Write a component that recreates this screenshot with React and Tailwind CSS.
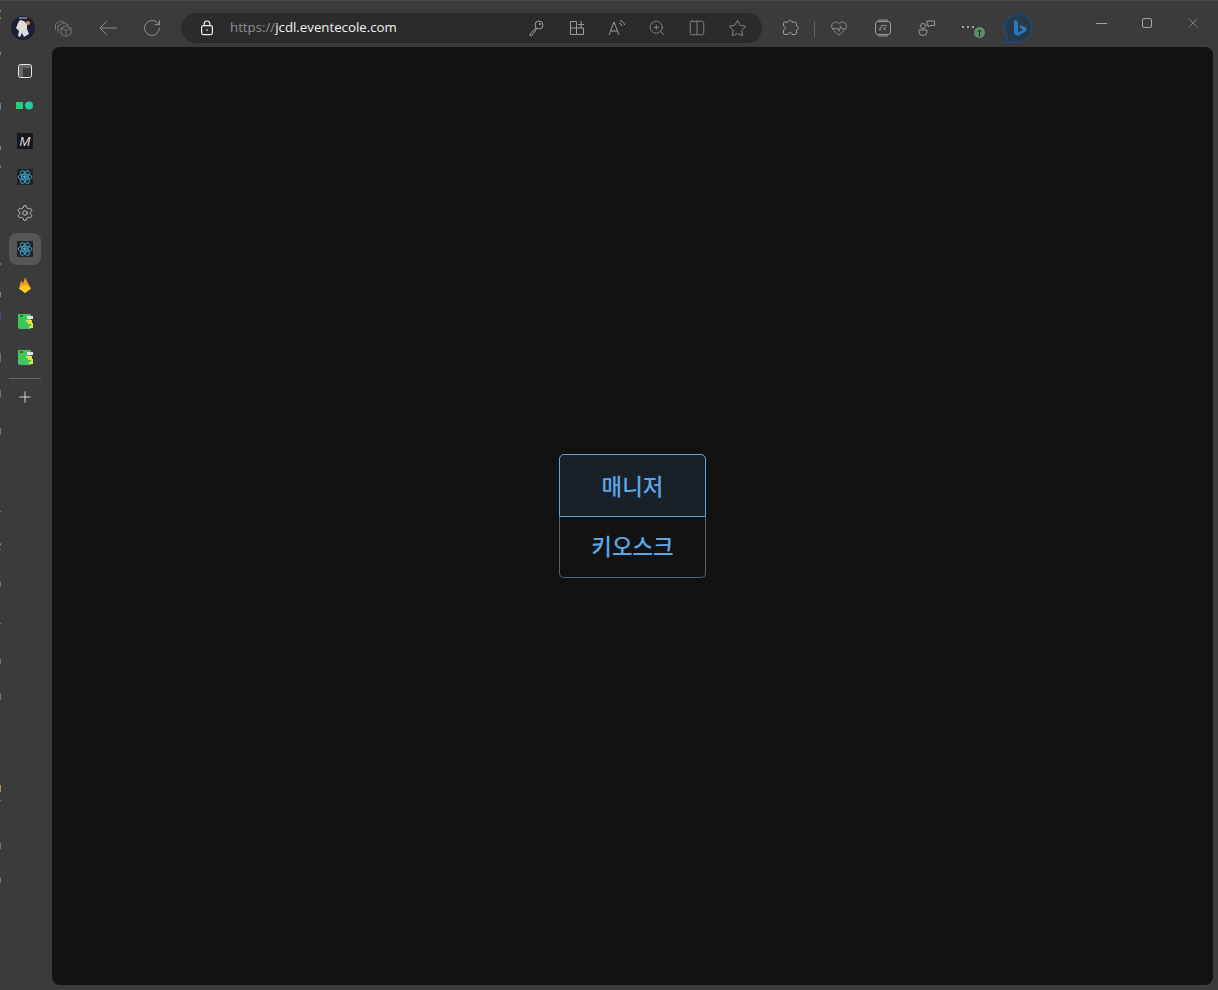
import { RotateCw, Settings, Plus, Star, ZoomIn, HeartPulse, X, Columns2 } from "lucide-react";

const edgeMarks = [
  [10, 2, "#5f8f3f"], [17, 2, "#5f8f3f"], [52, 3, "#6f8f4f"], [103, 7, "#5a7fa8"], [146, 4, "#8a7f55"], [165, 3, "#8a7048"],
  [263, 2, "#5a7fa8"], [292, 5, "#5d8ab0"], [312, 8, "#3f4a90"], [353, 9, "#77704f"], [390, 7, "#77705a"],
  [428, 7, "#5d7f90"], [511, 1, "#5d80a8"], [543, 3, "#77774a"], [549, 1, "#5d80a8"], [582, 5, "#5d7f90"], [623, 1, "#7a6aa0"],
  [659, 5, "#5d7f80"], [693, 7, "#5d7f90"], [785, 7, "#b08f3a"], [800, 1, "#c05a4a"], [843, 6, "#5d80a0"], [878, 5, "#5d80a0"],
];

function ReactIcon() {
  return (
    <div className="w-[16px] h-[16px] bg-[#20232a] flex items-center justify-center">
      <svg width="16" height="16" viewBox="0 0 16 16" fill="none" stroke="#3fa5c4" strokeWidth="0.9">
        <ellipse cx="8" cy="8" rx="7" ry="2.8" />
        <ellipse cx="8" cy="8" rx="7" ry="2.8" transform="rotate(60 8 8)" />
        <ellipse cx="8" cy="8" rx="7" ry="2.8" transform="rotate(120 8 8)" />
        <circle cx="8" cy="8" r="1.4" fill="#3fa5c4" />
      </svg>
    </div>
  );
}

function NoteIcon() {
  return (
    <svg width="16" height="17" viewBox="0 0 16 17">
      <path d="M1 1h12l1 1v14H3l-2-1z" fill="#3ec75c" />
      <rect x="3" y="2" width="3" height="2" fill="#1f7a3a" />
      <rect x="10" y="3" width="6" height="3" fill="#e0e0e0" />
      <path d="M9 7h6v3h1v5h-4v-2h2v-2h-3v-2h-2z" fill="#e6df48" />
    </svg>
  );
}

function SideSlot({ active, children }) {
  return (
    <div className={`w-[32px] h-[32px] my-[2px] rounded-lg flex items-center justify-center ${active ? "bg-[#565656]" : ""}`}>
      {children}
    </div>
  );
}

function Sidebar() {
  return (
    <div className="w-[52px] shrink-0 pl-[9px] pt-[6px] flex flex-col">
      <SideSlot>
        <svg width="16" height="16" viewBox="0 0 16 16" fill="none">
          <rect x="1.5" y="1.5" width="13" height="13" rx="2" stroke="#e6e6e6" strokeWidth="1" />
          <path d="M2 2h12v3H6v9H2z" fill="#e6e6e6" fillOpacity="0.25" />
        </svg>
      </SideSlot>
      <div className="h-[34px] flex items-center w-[32px] justify-center">
        <svg width="18" height="10" viewBox="0 0 18 10">
          <rect x="0" y="1" width="7" height="7" fill="#1dd47f" />
          <circle cx="13" cy="4.5" r="4" fill="#22cfa0" />
        </svg>
      </div>
      <SideSlot>
        <div className="w-[16px] h-[16px] bg-[#16161d] flex items-center justify-center text-[#dcdcdc] text-[13px] italic font-['Liberation_Sans',sans-serif] leading-none">
          M
        </div>
      </SideSlot>
      <SideSlot><ReactIcon /></SideSlot>
      <SideSlot><Settings size={18} strokeWidth={1} color="#e0e0e0" /></SideSlot>
      <SideSlot active><ReactIcon /></SideSlot>
      <SideSlot>
        <svg width="14" height="17" viewBox="0 0 14 16">
          <path d="M1 11L3 3l2 3 2-6 6 11-6 4.5z" fill="#f59a1b" />
          <path d="M1 11l6-4 6 4-6 4.5z" fill="#ffca28" />
        </svg>
      </SideSlot>
      <SideSlot><NoteIcon /></SideSlot>
      <SideSlot><NoteIcon /></SideSlot>
      <div className="w-[32px] h-px bg-[#666666] mt-[3px]" />
      <div className="w-[32px] h-[36px] flex items-center justify-center">
        <Plus size={18} strokeWidth={1.1} color="#f2f2f2" />
      </div>
    </div>
  );
}

function BarIcon({ className = "w-[40px]", children }) {
  return <div className={`${className} h-[30px] shrink-0 flex items-center justify-center`}>{children}</div>;
}

function TopBar() {
  const c = "#9c9c9c";
  return (
    <div className="h-[47px] shrink-0 flex items-start pt-[12px] border-t border-[#484848]">
      {/* profile */}
      <div className="w-[46px] h-[30px] flex items-center justify-center">
        <svg width="24" height="26" viewBox="0 0 24 26">
          <circle cx="12" cy="13" r="12" fill="#1b2035" />
          <path d="M7 8l2-3 4 1 3 3v5l2 5-5 3-2-4-2 4-2-1 1-5-3-3z" fill="#dcdcdc" />
          <path d="M8 3h8" stroke="#c8c8c8" strokeWidth="1" />
          <circle cx="17" cy="8" r="2" fill="#e8853a" />
        </svg>
      </div>
      <BarIcon className="w-[34px]">
        <svg width="18" height="18" viewBox="0 0 18 18" fill="none" stroke="#737373" strokeWidth="1">
          <path d="M1.5 11V5l5-3 4 1" />
          <path d="M4 14V7l5-3 6 2" />
          <path d="M7 9l4-2 6 2v6l-5 2.5L7 15z" />
          <path d="M7 9l5 2.5v6M12 11.5L17 9" />
        </svg>
      </BarIcon>
      <BarIcon className="w-[58px] ml-[-1px]">
        <svg width="18" height="16" viewBox="0 0 18 16" fill="none" stroke="#8a8a8a" strokeWidth="1">
          <path d="M18 8H1M8 1L1 8l7 7" />
        </svg>
      </BarIcon>
      <BarIcon className="w-[30px]"><RotateCw size={20} strokeWidth={1} color="#a0a0a0" /></BarIcon>

      {/* address bar */}
      <div className="ml-[14px] w-[581px] h-[30px] rounded-full bg-[#2b2b2b] flex items-center shrink-0">
        <div className="w-[52px] flex justify-center shrink-0">
          <svg width="14" height="16" viewBox="0 0 14 16" fill="none" stroke="#f0f0f0" strokeWidth="1.2">
            <rect x="1.6" y="5.6" width="10.8" height="9" rx="1.8" />
            <path d="M4.2 5.5V3.8a2.8 2.8 0 0 1 5.6 0v1.7" />
            <circle cx="7" cy="10" r="0.8" fill="#f0f0f0" stroke="none" />
          </svg>
        </div>
        <div className="w-[286px] -ml-[3px] shrink-0 text-[13.25px] whitespace-nowrap font-['Open_Sans',sans-serif] text-[#f2f2f2]">
          <span className="text-[#8f8f8f]">https://</span>jcdl.eventecole.com
        </div>
        <BarIcon>
          <svg width="18" height="18" viewBox="0 0 18 18" fill="none" stroke={c} strokeWidth="1">
            <circle cx="12" cy="6" r="4" />
            <path d="M9 9l-6 6v1.5h2L9.5 10" />
            <circle cx="13" cy="5" r="0.7" fill={c} />
          </svg>
        </BarIcon>
        <BarIcon className="w-[41px]">
          <svg width="16" height="16" viewBox="0 0 16 16" fill="none" stroke={c} strokeWidth="1">
            <path d="M1.5 1.5h6v13h-6zM7.5 8h7v6.5h-7zM1.5 8h6M9 4.5h6M12 1v7" />
          </svg>
        </BarIcon>
        <BarIcon>
          <svg width="18" height="18" viewBox="0 0 18 18" fill="none" stroke={c} strokeWidth="1">
            <path d="M1 16L6 3l5 13M2.8 12h6.4" />
            <path d="M11 4c1.5 0.5 2.5 1.5 3 3M12 1.5c2.5 0.7 4 2.3 4.8 4.5" />
          </svg>
        </BarIcon>
        <BarIcon><ZoomIn size={18} strokeWidth={1} color={c} /></BarIcon>
        <BarIcon><Columns2 size={18} strokeWidth={1} color={c} /></BarIcon>
        <BarIcon><Star size={19} strokeWidth={1} color={c} /></BarIcon>
      </div>

      <BarIcon className="w-[40px] ml-[8px]">
        <svg width="18" height="18" viewBox="0 0 18 18" fill="none" stroke={c} strokeWidth="1">
          <path d="M7 3.2c0-2.6 4-2.6 4 0h3.5a1 1 0 0 1 1 1V7c2.6 0 2.6 4 0 4v3a1.5 1.5 0 0 1-1.5 1.5h-3c0-2.6-4-2.6-4 0H4A1.5 1.5 0 0 1 2.500 14v-3c2.600 0 2.600-4 0-4V4.200a1 1 0 0 1 1-1z" />
        </svg>
      </BarIcon>
      <div className="w-px h-[16px] bg-[#666666] mt-[8px] ml-[4px]" />
      <BarIcon className="w-[48px]"><HeartPulse size={18} strokeWidth={1} color={c} /></BarIcon>
      <BarIcon>
        <svg width="16" height="18" viewBox="0 0 16 18" fill="none" stroke={c} strokeWidth="1">
          <rect x="0.5" y="2.500" width="15" height="13" rx="2.500" />
          <path d="M3 1h10M3 17h10" />
          <path d="M4 9.500l1 2 1.500-5H12M8 8l3 3.500M11 8l-3 3.500" strokeWidth="0.8" />
        </svg>
      </BarIcon>
      <BarIcon className="w-[48px]">
        <svg width="18" height="18" viewBox="0 0 18 18" fill="none" stroke={c} strokeWidth="1">
          <circle cx="5" cy="7" r="2.500" />
          <path d="M1 11h8v1.500a4 4 0 0 1-8 0z" />
          <path d="M9 2h7.500v4.500H12L10.500 8V6.500H9z" />
        </svg>
      </BarIcon>
      <div className="relative w-[34px] h-[30px] shrink-0 flex items-center justify-center">
        <div className="flex gap-[3px] -mt-[2px]">
          <div className="w-[2px] h-[2px] bg-[#a8a8a8]" />
          <div className="w-[2px] h-[2px] bg-[#a8a8a8]" />
          <div className="w-[2px] h-[2px] bg-[#a8a8a8]" />
        </div>
        <div className="absolute left-[23px] top-[14px] w-[11px] h-[11px] rounded-full bg-[#5f8f68] flex items-center justify-center">
          <svg width="7" height="8" viewBox="0 0 7 8" fill="none" stroke="#1f2f24" strokeWidth="1">
            <path d="M3.500 8V1M1.500 3l2-2 2 2" />
          </svg>
        </div>
      </div>
      <div className="w-[32px] h-[32px] ml-[17px] -mt-[1px] shrink-0">
        <svg width="32" height="32" viewBox="0 0 32 32" fill="none">
          <path d="M16 2a14 14 0 1 1-4 27.400c-3 .6-6 1.300-9 1 1.800-1.500 2.400-3.600 2.200-6A14 14 0 0 1 16 2z" fill="#263a4c" stroke="#1d4f80" strokeWidth="1.200" />
          <path d="M12 8l4 1.400v11l5-2.700-2.400-1.200-1.300-3.500 7 2.400v3.600L16 24l-4-2.200z" fill="#2a78b8" />
        </svg>
      </div>
      <div className="flex-1 flex justify-end items-start pr-[2px]">
        <div className="w-[46px] h-[20px] flex items-center justify-center"><div className="w-[11px] h-px bg-[#a4a4a4]" /></div>
        <div className="w-[46px] h-[20px] flex items-center justify-center"><div className="w-[10px] h-[10px] rounded-[2px] border border-[#a4a4a4]" /></div>
        <div className="w-[46px] h-[20px] flex items-center justify-center"><X size={16} strokeWidth={0.9} color="#aaaaaa" /></div>
      </div>
    </div>
  );
}

export default function App() {
  return (
    <div className="relative w-[1218px] h-[990px] bg-[#3b3b3b] flex flex-col overflow-hidden font-['Noto_Sans_CJK_KR',sans-serif]">
      {edgeMarks.map(([top, h, color]) => (
        <div key={top} className="absolute left-0 w-[1px]" style={{ top, height: h, background: color }} />
      ))}
      <TopBar />
      <div className="flex-1 flex min-h-0">
        <Sidebar />
        <main className="flex-1 mr-[5px] mb-[5px] rounded-lg bg-[#121212] flex items-center justify-center">
          <div className="w-[147px] flex flex-col text-[22.4px] font-medium text-[#5aa7e8]">
            <button className="h-[63px] rounded-t-[5px] border border-[#5ba6e4] bg-[#1a2027] flex items-center justify-center">매니저</button>
            <button className="h-[61px] pb-[2px] rounded-b-[5px] border border-t-0 border-[#4d6378] flex items-center justify-center">키오스크</button>
          </div>
        </main>
      </div>
    </div>
  );
}
